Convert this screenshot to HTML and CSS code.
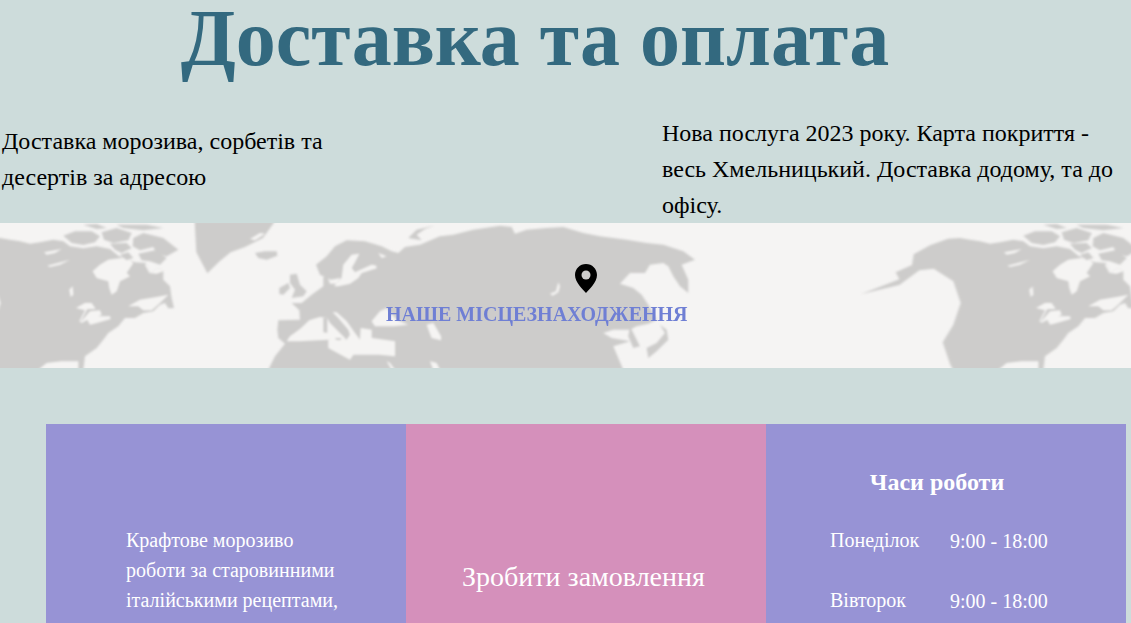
FILE: index.html
```html
<!DOCTYPE html>
<html lang="uk">
<head>
<meta charset="utf-8">
<title>Доставка та оплата</title>
<link rel="stylesheet" href="styles.css">
</head>
<body>
<h1 class="title">Доставка та оплата</h1>
<section class="intro">
  <p class="intro-left">Доставка морозива, сорбетів та десертів за адресою</p>
  <p class="intro-right">Нова послуга 2023 року. Карта покриття - весь Хмельницький. Доставка додому, та до офісу.</p>
</section>
<section class="map">
  <svg class="map-art" viewBox="0 0 1131 145" preserveAspectRatio="none" aria-hidden="true">
    <defs>
      <filter id="soft" x="-2%" y="-2%" width="104%" height="104%"><feGaussianBlur stdDeviation="0.8"/></filter>
      <g id="america">
        <path class="land" d="M-296 213L-182 169L-193 148L-144 126L-139 94L-90 67L-36 47L0 45L30 50L60 55L90 62L120 58L160 50L190 55L210 70L250 76L290 70L330 78L355 98L380 108L405 118L440 120L450 150L475 135L490 145L490 170L510 190L515 225L522 255L505 256L495 240L480 245L460 265L430 270L405 285L375 285L355 310L325 330L310 350L290 375L255 400L250 440L-5 472L-30 423L-52 358L-20 305L2 240L-20 175L-79 137L-122 142L-182 186Z"/>
        <path class="sea" d="M278 145L300 125L325 110L365 105L385 108L400 120L380 150L390 160L360 175L350 205L335 215L328 195L325 175L290 165Z"/>
        <path class="sea" d="M440 120L450 150L475 135L490 145L470 152L448 150L435 125Z"/>
        <path class="sea" d="M115 440L140 420L185 415L235 415L235 440Z"/>
        <path class="sea" d="M228 255L255 240L275 240L287 258L262 258L240 300L270 265L300 262L305 275L295 280L330 280L332 288L290 300L270 305L262 290L245 300L238 295L255 262Z"/>
        <path class="sea" d="M385 250L420 230L470 222L505 215L480 240L455 262L430 262L415 250Z"/>
        <path class="sea" d="M208 200L218 190L220 215L212 222Z"/>
        <path class="sea" d="M132 88L185 78L165 90L140 95Z"/>
        <path class="sea" d="M142 128L210 110L180 125L150 132Z"/>
        <path class="land" d="M190 38L225 25L275 25L300 40L285 58L250 66L215 60Z"/>
        <path class="land" d="M250 5L290 3L320 15L290 18Z"/>
        <path class="land" d="M305 28L350 15L395 30L385 52L340 60L312 50Z"/>
        <path class="land" d="M350 5L440 5L490 15L430 22L370 15Z"/>
        <path class="land" d="M400 45L430 30L490 45L535 80L500 100L470 92L460 72L420 82L398 70Z"/>
        <path class="land" d="M330 62L380 60L395 75L365 90L345 80Z"/>
        <path class="land" d="M360 95L385 88L400 105L380 112Z"/>
        <path class="land" d="M415 92L465 82L500 105L480 125L450 115L425 112Z"/>
      </g>
    </defs>
    <rect class="sea" width="1131" height="145"/>
    <g filter="url(#soft)">
      <use href="#america" transform="scale(.3333)"/>
      <use href="#america" transform="translate(960) scale(.3333)"/>
      <g transform="translate(240) scale(.3333)">
        <path class="land" d="M-136 -5L-131 88L-98 151L-61 115L-28 88L15 72L69 45L105 -5Z"/>
        <path class="sea" d="M30 48L60 30L75 32L45 52Z"/>
        <path class="land" d="M45 90L75 85L110 85L112 98L80 110L55 105Z"/>
        <path class="land" d="M150 155L170 152L180 185L200 205L190 220L155 225L165 200L150 180Z"/>
        <path class="land" d="M118 195L145 180L150 195L130 215L118 213Z"/>
        <path class="land" d="M505 45L530 20L582 8L555 18L530 35L545 52Z"/>
        <path class="land" d="M115 292L180 290L178 262L155 240L185 240L215 215L250 190L250 162L262 162L270 182L290 182L302 165L272 170L240 155L228 125L260 100L285 70L320 52L375 55L425 70L455 85L475 90L495 72L540 65L600 40L640 35L700 20L780 8L815 12L825 32L860 20L920 15L970 12L1030 30L1080 40L1160 50L1220 60L1270 65L1330 85L1365 110L1325 125L1345 170L1345 210L1320 190L1300 160L1285 130L1270 120L1230 125L1215 150L1170 150L1140 182L1180 195L1205 215L1225 245L1250 290L1225 302L1190 310L1170 320L1120 320L1090 330L1115 345L1170 355L1120 370L1150 440L85 440L105 400L135 362L115 345L112 320Z"/>
        <path class="land" d="M1170 310L1200 370L1180 375L1165 340Z"/>
        <path class="land" d="M1220 375L1250 360L1275 330L1260 305L1280 320L1285 350L1250 385L1225 405Z"/>
        <path class="sea" d="M282 190L305 165L310 125L335 95L358 92L345 118L335 135L345 148L395 125L412 135L365 150L355 165L330 182L295 190Z"/>
        <path class="sea" d="M415 90L440 100L425 105Z"/>
        <path class="sea" d="M395 125L410 128L405 138Z"/>
        <path class="sea" d="M140 355L150 340L180 318L208 292L240 282L262 285L270 300L300 330L320 350L285 348L275 350L265 350L175 355Z"/>
        <path class="sea" d="M265 350L290 345L320 350L330 335L325 320L295 285L278 268L290 268L320 295L345 330L360 350L362 315L395 320L395 345L465 355L465 400L420 395L340 395L330 410L265 375Z"/>
        <path class="land" d="M250 285L262 285L262 330L250 328Z"/>
        <path class="land" d="M285 345L305 345L300 352L288 350Z"/>
        <path class="sea" d="M395 295L420 265L440 255L470 290L505 305L460 310L405 310Z"/>
        <path class="sea" d="M560 305L580 300L603 340L603 352L575 345Z"/>
        <path class="sea" d="M440 415L450 420L465 440L455 440Z"/>
        <path class="sea" d="M570 415L590 420L600 440L580 440Z"/>
        <path class="sea" d="M930 212L948 205L955 178L960 190L955 208L938 218Z"/>
      </g>
    </g>
  </svg>
  <svg class="pin" viewBox="0 0 22 29" aria-hidden="true">
    <path d="M11 0C4.900 0 0 4.900 0 11c0 7.500 8 14.500 11 18 3-3.500 11-10.500 11-18C22 4.900 17.100 0 11 0Z"/>
    <circle cx="11" cy="11" r="4.500"/>
  </svg>
  <h2 class="map-label">НАШЕ МІСЦЕЗНАХОДЖЕННЯ</h2>
</section>
<section class="cards">
  <div class="card card-about">
    <p class="about-text">Крафтове морозиво<br>роботи за старовинними<br>італійськими рецептами,</p>
  </div>
  <div class="card card-order">
    <p class="order-text">Зробити замовлення</p>
  </div>
  <div class="card card-hours">
    <h3 class="hours-title">Часи роботи</h3>
    <div class="hours-row"><span class="day">Понеділок</span><span class="time">9:00 - 18:00</span></div>
    <div class="hours-row"><span class="day">Вівторок</span><span class="time">9:00 - 18:00</span></div>
  </div>
</section>
</body>
</html>
```
FILE: styles.css
```css
html, body {
  margin: 0;
  height: 623px;
  overflow: hidden;
}
body {
  background: #cddcdb;
  color: #000;
  font-family: "Liberation Serif", "Times New Roman", serif;
}
.title {
  margin: 0;
  width: 1070px;
  height: 115px;
  text-align: center;
  font-size: 80px;
  line-height: 76px;
  font-weight: 700;
  color: #33697f;
}
.intro {
  display: flex;
  justify-content: space-between;
  height: 108px;
  padding: 0 2px;
  font-size: 24px;
  line-height: 36px;
}
.intro p { margin: 0; }
.intro-left { width: 335px; padding-top: 8px; }
.intro-right { width: 467px; }
.map {
  position: relative;
  height: 145px;
  overflow: hidden;
}
.map-art {
  display: block;
  width: 100%;
  height: 100%;
}
.land { fill: #cdcccb; }
.sea { fill: #f5f4f3; }
.pin {
  position: absolute;
  left: 575px;
  top: 41px;
  width: 22px;
  height: 29px;
  fill: #000;
}
.pin circle { fill: #cdcccb; }
.map-label {
  position: absolute;
  left: 386px;
  top: 81px;
  margin: 0;
  font-size: 20px;
  line-height: 20px;
  font-weight: 700;
  white-space: nowrap;
  color: #6f7fd4;
}
.cards {
  display: flex;
  width: 1080px;
  height: 260px;
  margin: 56px 0 0 46px;
  color: #fff;
}
.card { width: 360px; box-sizing: border-box; }
.card-about { background: #9793d5; padding: 101px 0 0 80px; }
.card-order { background: #d590bb; padding: 136px 5px 0 0; text-align: center; }
.card-hours { background: #9793d5; padding: 44px 0 0 64px; }
.about-text {
  margin: 0;
  font-size: 20px;
  line-height: 30px;
}
.order-text {
  margin: 0;
  font-size: 28px;
  line-height: 34px;
}
.hours-title {
  margin: 0 0 28px;
  width: 214px;
  text-align: center;
  font-size: 24px;
  line-height: 28px;
  font-weight: 700;
}
.hours-row {
  display: flex;
  height: 60px;
}
.day {
  width: 120px;
  font-size: 20px;
  line-height: 32px;
}
.time {
  font-size: 20px;
  line-height: 34px;
}
```
